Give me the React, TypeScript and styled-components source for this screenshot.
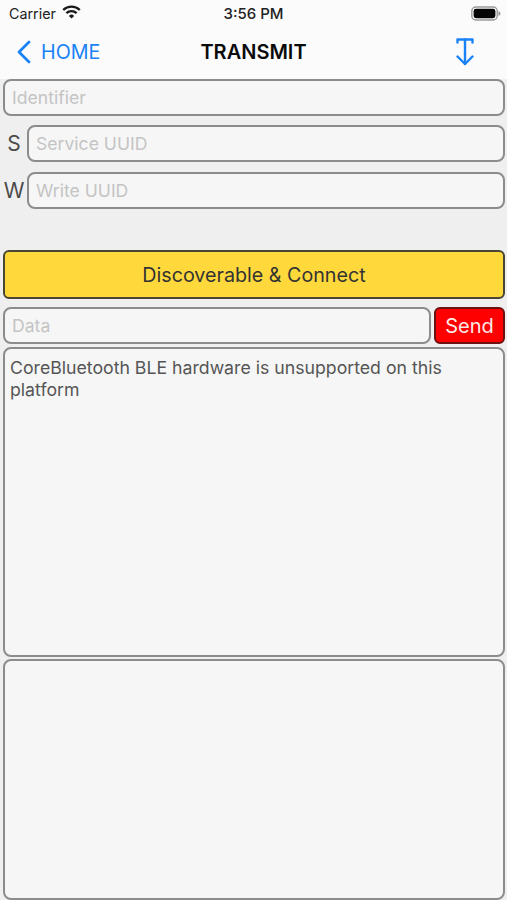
import React from "react";
import styled, { createGlobalStyle } from "styled-components";

const GlobalStyle = createGlobalStyle`
  html, body {
    margin: 0;
    padding: 0;
    background: #efefef;
  }
  * {
    box-sizing: border-box;
  }
`;

const Screen = styled.div`
  width: 507px;
  height: 900px;
  overflow: hidden;
  display: flex;
  flex-direction: column;
  background: #efefef;
  font-family: Inter, "Liberation Sans", sans-serif;
`;

const StatusBar = styled.div`
  height: 27px;
  flex: none;
  display: grid;
  grid-template-columns: 1fr auto 1fr;
  align-items: center;
  padding: 0 6px 0 9px;
  background: #fbfbfb;
  color: #222;
  font-size: 14.3px;
`;

const Carrier = styled.div`
  display: flex;
  align-items: center;
  gap: 6px;

  & svg {
    margin-top: -4px;
  }
`;

const Clock = styled.div`
  font-weight: 500;
  font-size: 15px;
  margin-left: -3px;
`;

const Battery = styled.div`
  justify-self: end;
  display: flex;
  margin-top: -1px;
`;

const NavBar = styled.div`
  height: 52px;
  flex: none;
  display: grid;
  grid-template-columns: 1fr auto 1fr;
  align-items: center;
  padding: 0 16px 2px;
  background: #fbfbfb;
`;

const BackLink = styled.div`
  display: flex;
  align-items: center;
  gap: 10px;
  color: #1a82f7;
  font-size: 19.7px;
`;

const NavTitle = styled.div`
  color: #0b0b0b;
  font-size: 20px;
  font-weight: 600;
`;

const NavAction = styled.div`
  justify-self: end;
  display: flex;
  margin-right: 17px;
`;

const Form = styled.div`
  flex: 1;
  display: flex;
  flex-direction: column;
  padding: 0 2px 0 3px;
`;

const FieldRow = styled.div<{ $top?: number }>`
  display: flex;
  align-items: center;
  margin-top: ${(p) => p.$top ?? 0}px;
`;

const RowLabel = styled.div`
  width: 22px;
  margin-right: 2px;
  flex: none;
  text-align: center;
  color: #4a4a4a;
  font-size: 21px;
`;

const Field = styled.div`
  flex: 1;
  height: 37px;
  display: flex;
  align-items: center;
  padding: 0 7px;
  background: #f6f6f6;
  border: 2px solid #8c8c8c;
  border-radius: 8px;
  color: #c4c4c4;
  font-size: 17.6px;
`;

const ConnectButton = styled.div`
  height: 49px;
  margin-top: 41px;
  flex: none;
  display: flex;
  align-items: center;
  justify-content: center;
  background: #ffd93b;
  border: 2px solid #4a4636;
  border-radius: 6px;
  color: #333;
  font-size: 19.7px;
`;

const SendButton = styled.div`
  width: 71px;
  height: 37px;
  margin-left: 3px;
  flex: none;
  display: flex;
  align-items: center;
  justify-content: center;
  background: #fe0000;
  border: 2px solid #6e1010;
  border-radius: 6px;
  color: #fbe9e9;
  font-size: 20px;
`;

const TextPanel = styled.div<{ $height: number; $top: number }>`
  height: ${(p) => p.$height}px;
  margin-top: ${(p) => p.$top}px;
  flex: none;
  padding: 8px 5px;
  background: #f6f6f6;
  border: 2px solid #8c8c8c;
  border-radius: 8px;
  color: #555;
  font-size: 17.7px;
  line-height: 22px;
`;

export default function App() {
  return (
    <Screen>
      <GlobalStyle />
      <StatusBar>
        <Carrier>
          Carrier
          <svg width="19" height="14" viewBox="0 0 19 14" fill="none" stroke="#1a1a1a" strokeWidth="2.4">
            <path d="M1.2 5 a12 12 0 0 1 16.6 0" />
            <path d="M4.4 8.2 a7.4 7.4 0 0 1 10.2 0" />
            <path d="M9.5 13.4 L6.9 10.9 a3.7 3.7 0 0 1 5.2 0 Z" fill="#1a1a1a" stroke="none" />
          </svg>
        </Carrier>
        <Clock>3:56 PM</Clock>
        <Battery>
          <svg width="30" height="15" viewBox="0 0 30 15">
            <rect x="0.8" y="1" width="25.4" height="13" rx="4" fill="none" stroke="#9a9a9a" strokeWidth="1.4" />
            <rect x="2.6" y="2.8" width="21.8" height="9.4" rx="2.4" fill="#050505" />
            <path d="M27.4 5.2 c1.4 0.4 2.2 1.2 2.2 2.3 s-0.8 1.9-2.2 2.3 Z" fill="#9a9a9a" />
          </svg>
        </Battery>
      </StatusBar>
      <NavBar>
        <BackLink>
          <svg width="15" height="24" viewBox="0 0 15 24" fill="none" stroke="#1a82f7" strokeWidth="2.8" strokeLinecap="round" strokeLinejoin="round">
            <path d="M13 2 L3 12 L13 22" />
          </svg>
          HOME
        </BackLink>
        <NavTitle>TRANSMIT</NavTitle>
        <NavAction>
          <svg width="18" height="28" viewBox="0 0 18 28" fill="none" stroke="#1a82f7" strokeWidth="2.4" strokeLinecap="round" strokeLinejoin="round">
            <path d="M1.5 4.5 V1.5 H16.5 V4.5" />
            <path d="M9 1.5 V26" />
            <path d="M1.5 18.5 L9 26 L16.5 18.5" />
          </svg>
        </NavAction>
      </NavBar>
      <Form>
        <FieldRow>
          <Field>Identifier</Field>
        </FieldRow>
        <FieldRow $top={9}>
          <RowLabel>S</RowLabel>
          <Field>Service UUID</Field>
        </FieldRow>
        <FieldRow $top={10}>
          <RowLabel>W</RowLabel>
          <Field>Write UUID</Field>
        </FieldRow>
        <ConnectButton>Discoverable &amp; Connect</ConnectButton>
        <FieldRow $top={8}>
          <Field>Data</Field>
          <SendButton>Send</SendButton>
        </FieldRow>
        <TextPanel $height={310} $top={3}>
          CoreBluetooth BLE hardware is unsupported on this platform
        </TextPanel>
        <TextPanel $height={241} $top={2} />
      </Form>
    </Screen>
  );
}
